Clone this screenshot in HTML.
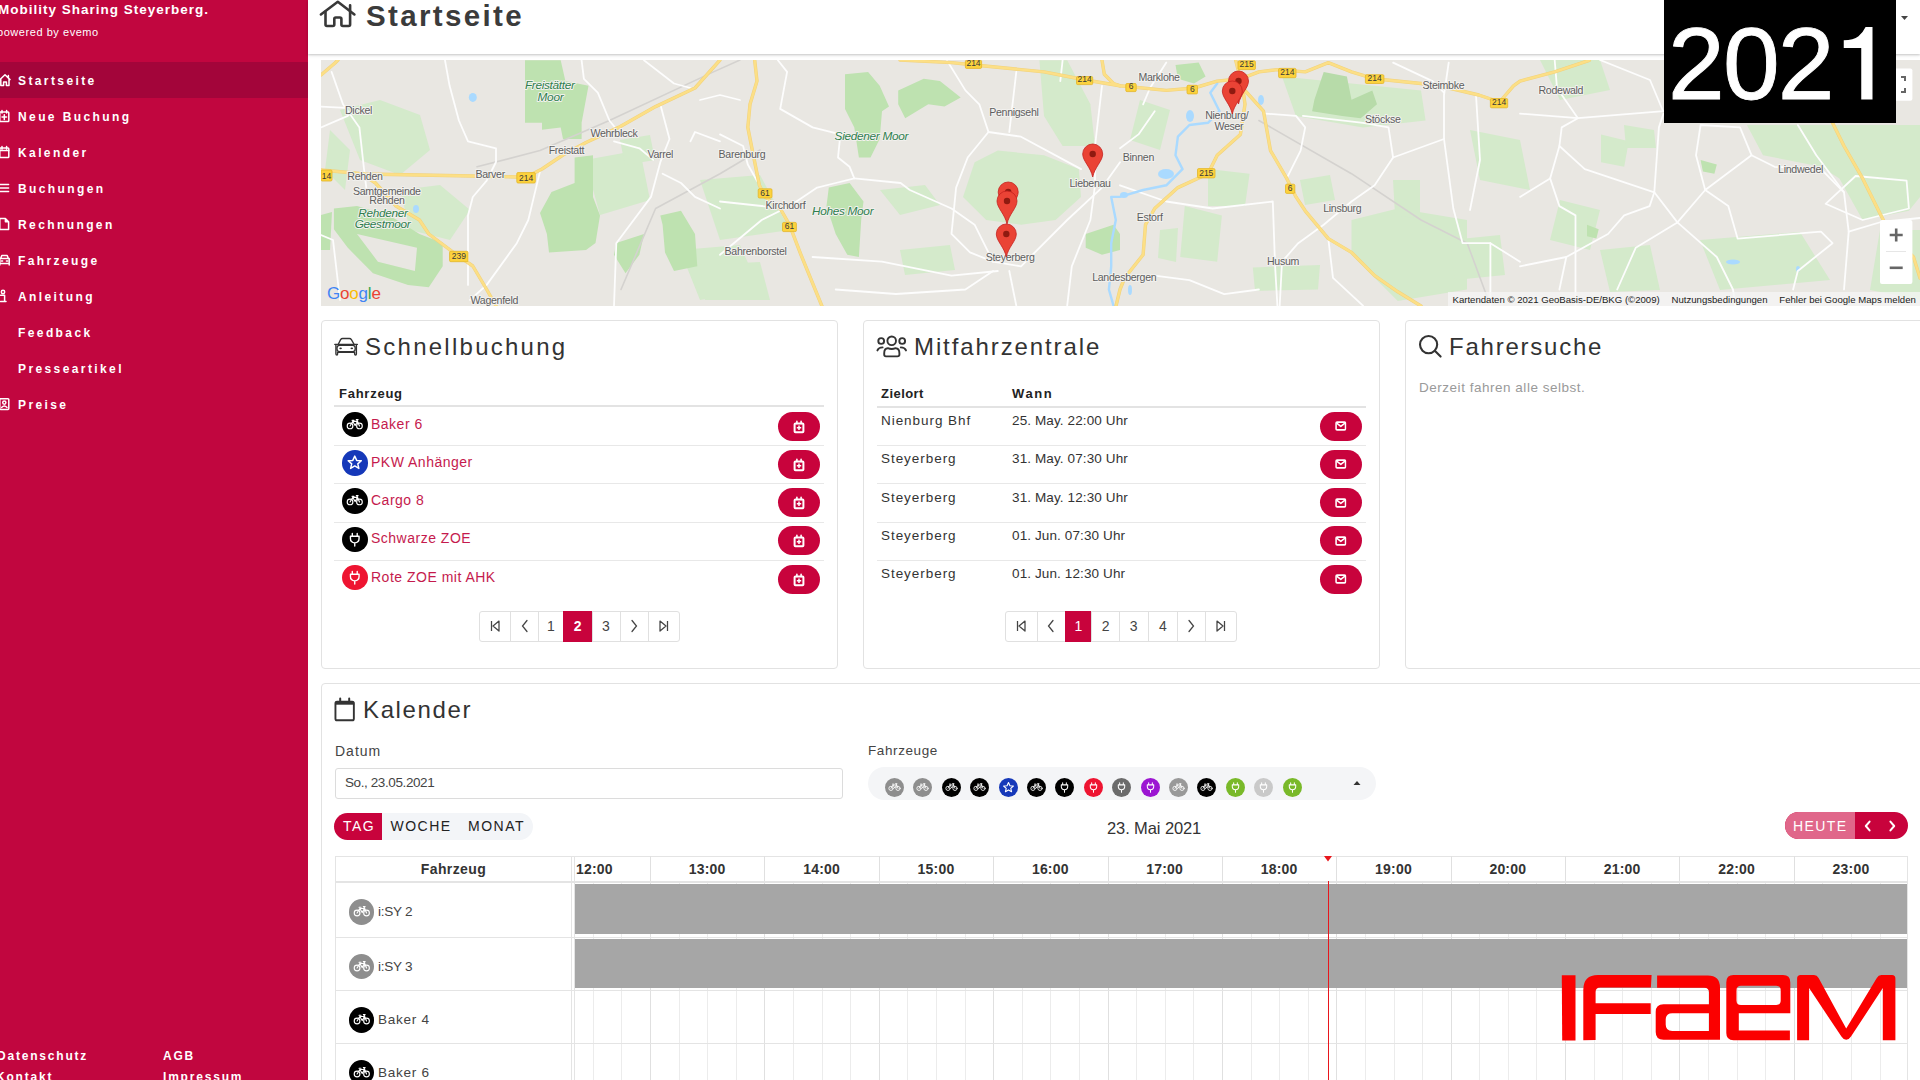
<!DOCTYPE html>
<html><head><meta charset="utf-8"><title>Startseite</title>
<style>
*{box-sizing:border-box;margin:0;padding:0}
html,body{width:1920px;height:1080px;overflow:hidden;background:#fff;font-family:"Liberation Sans",sans-serif;color:#333}
.a{position:absolute;white-space:nowrap}
.nav{position:absolute;left:18px;font-weight:bold;font-size:12px;letter-spacing:2.4px;white-space:nowrap;line-height:14px;color:#fff}
.card{position:absolute;background:#fff;border:1px solid #e2e2e2;border-radius:4px}
.ttl{position:absolute;font-size:24px;color:#333;white-space:nowrap;line-height:28px;letter-spacing:1.9px}
.th{position:absolute;font-weight:bold;font-size:13px;color:#222;white-space:nowrap;line-height:15px;letter-spacing:.45px}
.td{position:absolute;font-size:13.5px;color:#333;white-space:nowrap;line-height:16px;letter-spacing:.3px}
.btn{position:absolute;width:42px;height:29px;border-radius:15px;background:#c8033c}
.btn svg{position:absolute;left:15px;top:8px}
.vc{position:absolute;border-radius:50%}
.vc svg{position:absolute;left:0;top:0;width:100%;height:100%}
.pg{position:absolute;top:611px;height:31px;border:1px solid #e0e0e0;border-radius:3px;overflow:hidden}
.pg div{position:absolute;top:0;height:29px;border-left:1px solid #e0e0e0;font-size:14px;color:#444;line-height:29px;text-align:center}
.pg div.f{border-left:none}
.pg .act{background:#c8033c;color:#fff;font-weight:bold;border-left-color:#c8033c}
.gl{position:absolute;background:#e6e6e6}
</style></head><body>

<svg width="0" height="0" style="position:absolute">
<defs>
<symbol id="bike" viewBox="0 0 26 26"><g fill="none" stroke="#fff" stroke-width="1.15" stroke-linecap="round" stroke-linejoin="round"><circle cx="8.2" cy="14.2" r="2.9"/><circle cx="17.8" cy="14.2" r="2.9"/><path d="M8.2 14.2 L11 9.6 L13.4 13.8 L15.8 9.4 L17.8 14.2 M11 9.6 H15.8 M15.2 7.8 L15.8 9.4 M14.6 7.8 H16.4 M10.2 8.4 H12.2"/></g></symbol>
<symbol id="plug" viewBox="0 0 26 26"><g fill="none" stroke="#fff" stroke-width="1.4" stroke-linecap="round" stroke-linejoin="round"><path d="M10.5 6.5 V9.2 M15.5 6.5 V9.2 M8.6 9.4 H17.4 V11.6 Q17.4 15.6 13 16.2 Q8.6 15.6 8.6 11.6 Z M13 16.2 V19.4"/></g></symbol>
<symbol id="star" viewBox="0 0 26 26"><path fill="none" stroke="#fff" stroke-width="1.5" stroke-linejoin="round" d="M13 6.2 L15 10.6 L19.7 11 L16.1 14.1 L17.2 18.8 L13 16.3 L8.8 18.8 L9.9 14.1 L6.3 11 L11 10.6 Z"/></symbol>
<symbol id="calp" viewBox="0 0 12 14"><g fill="none" stroke="#fff" stroke-width="2"><rect x="1.6" y="3.4" width="8.8" height="8.8" rx="0.8"/></g><g stroke="#fff" stroke-width="1.6" stroke-linecap="round"><path d="M3.9 1.2 V3.6 M8.1 1.2 V3.6"/></g><g stroke="#fff" stroke-width="1.5"><path d="M6 5.6 V10 M3.8 7.8 H8.2"/></g></symbol>
<symbol id="env" viewBox="0 0 14 12"><g fill="none" stroke="#fff" stroke-width="1.9" stroke-linejoin="round"><rect x="1.3" y="1.3" width="11.4" height="9.4" rx="1.2"/><path d="M2 2.6 L7 6.4 L12 2.6"/></g></symbol>
</defs></svg>

<div class="a" style="left:0;top:0;width:308px;height:1080px;background:#c1063f;overflow:hidden">
<div class="a" style="left:-2px;top:2px;font-weight:bold;font-size:13.5px;letter-spacing:1.0px;line-height:16px;color:#fff">Mobility Sharing Steyerberg.</div>
<div class="a" style="left:-3px;top:26px;font-size:11px;letter-spacing:.55px;line-height:12px;color:#fff">powered by evemo</div>
<div class="a" style="left:0;top:62px;width:308px;height:36px;background:#a3053a"></div>
<div class="nav" style="top:74px">Startseite</div>
<div class="nav" style="top:110px">Neue Buchung</div>
<div class="nav" style="top:146px">Kalender</div>
<div class="nav" style="top:182px">Buchungen</div>
<div class="nav" style="top:218px">Rechnungen</div>
<div class="nav" style="top:254px">Fahrzeuge</div>
<div class="nav" style="top:290px">Anleitung</div>
<div class="nav" style="top:326px">Feedback</div>
<div class="nav" style="top:362px">Presseartikel</div>
<div class="nav" style="top:398px">Preise</div>
<svg class="a" style="left:-1px;top:73px" width="12" height="14" viewBox="0 0 12 14"><g fill="none" stroke="#fff" stroke-width="1.5" stroke-linejoin="round" stroke-linecap="round"><path d="M0.5 7 L6 1.8 L11 6.6 M1.8 6 V12.4 H4.6 V9 H7.4 V12.4 H10 V6 M9.4 2.4 V4.8"/></g></svg>
<svg class="a" style="left:-1px;top:109px" width="12" height="14" viewBox="0 0 12 14"><g fill="none" stroke="#fff" stroke-width="1.5" stroke-linejoin="round" stroke-linecap="round"><rect x="0.8" y="3" width="9" height="9.6" rx="0.8"/><path d="M3 1.4 V4 M7.6 1.4 V4 M5.3 5.8 V10.4 M3 8.1 H7.6"/></g></svg>
<svg class="a" style="left:-1px;top:145px" width="12" height="14" viewBox="0 0 12 14"><g fill="none" stroke="#fff" stroke-width="1.5" stroke-linejoin="round" stroke-linecap="round"><rect x="0.8" y="3" width="9" height="9.6" rx="0.8"/><path d="M3 1.4 V4 M7.6 1.4 V4 M0.8 5.4 H9.8"/></g></svg>
<svg class="a" style="left:-1px;top:181px" width="12" height="14" viewBox="0 0 12 14"><g fill="none" stroke="#fff" stroke-width="1.5" stroke-linejoin="round" stroke-linecap="round"><path d="M0.8 3.6 H9.6 M0.8 7 H9.6 M0.8 10.4 H9.6"/></g></svg>
<svg class="a" style="left:-1px;top:217px" width="12" height="14" viewBox="0 0 12 14"><g fill="none" stroke="#fff" stroke-width="1.5" stroke-linejoin="round" stroke-linecap="round"><path d="M0.8 1.6 H6.4 L9.6 4.8 V12.6 H0.8 Z M6.4 1.6 V4.8 H9.6"/></g></svg>
<svg class="a" style="left:-1px;top:253px" width="12" height="14" viewBox="0 0 12 14"><g fill="none" stroke="#fff" stroke-width="1.5" stroke-linejoin="round" stroke-linecap="round"><path d="M1.6 5.6 L2.8 2.4 H8.2 L9.4 5.6 M0.8 5.6 H10.2 V10.4 H0.8 Z M0.8 10.4 V12 M10.2 10.4 V12 M2.4 8 H3.6 M7.4 8 H8.6"/></g></svg>
<svg class="a" style="left:-1px;top:289px" width="12" height="14" viewBox="0 0 12 14"><g fill="none" stroke="#fff" stroke-width="1.5" stroke-linejoin="round" stroke-linecap="round"><circle cx="4" cy="3" r="1.7"/><path d="M1.6 6.2 H5.6 V12.4 M1.6 12.4 H7"/></g></svg>
<svg class="a" style="left:-1px;top:397px" width="12" height="14" viewBox="0 0 12 14"><g fill="none" stroke="#fff" stroke-width="1.5" stroke-linejoin="round" stroke-linecap="round"><rect x="0.8" y="1.8" width="9" height="10.6" rx="0.8"/><circle cx="5.3" cy="5.6" r="1.6"/><path d="M2.6 10.4 Q5.3 7.4 8 10.4"/></g></svg>
<div class="nav" style="left:-3px;top:1049px;letter-spacing:1.8px">Datenschutz</div>
<div class="nav" style="left:163px;top:1049px;letter-spacing:1.8px">AGB</div>
<div class="nav" style="left:-4px;top:1069.5px;letter-spacing:1.8px">Kontakt</div>
<div class="nav" style="left:163px;top:1069.5px;letter-spacing:1.8px">Impressum</div>
</div>
<div class="a" style="left:308px;top:0;width:1612px;height:54px;background:#fff;box-shadow:0 1px 2px rgba(0,0,0,.18),0 2px 4px rgba(0,0,0,.06)"></div>
<svg class="a" style="left:315px;top:0" width="45" height="32" viewBox="315 0 45 32"><g fill="none" stroke="#383838" stroke-width="2.6" stroke-linecap="round" stroke-linejoin="round"><path d="M320.9 14.5 L337.8 1.8 L354.4 14.5"/><path d="M325.5 11.8 V24.5 Q325.5 26 327 26 H332.8 Q334.3 26 334.3 24.5 V19 Q334.3 17.5 335.8 17.5 H339.9 Q341.4 17.5 341.4 19 V24.5 Q341.4 26 342.9 26 H348.6 Q350.1 26 350.1 24.5 V5.3"/></g></svg>
<div class="a" style="left:366px;top:0px;font-weight:bold;font-size:29.5px;letter-spacing:2.35px;line-height:32px;color:#3b3b3b">Startseite</div>
<svg class="a" style="left:1900px;top:15px" width="10" height="6"><path d="M1 1 H8 L4.5 5 Z" fill="#444"/></svg>
<div class="a" style="left:321px;top:60px;width:1599px;height:246px;overflow:hidden;background:#e9e7e2">
<svg width="1599" height="246" viewBox="321 60 1599 246" style="position:absolute;left:0;top:0">
<rect x="321" y="60" width="1599" height="246" fill="#e9e7e2"/>
<path d="M340.0 110.0 L380.0 100.0 L420.0 115.0 L430.0 150.0 L400.0 175.0 L360.0 160.0 Z" fill="#d4eacb" opacity="1"/>
<path d="M400.0 190.0 L440.0 185.0 L470.0 210.0 L450.0 240.0 L410.0 230.0 Z" fill="#d4eacb" opacity="1"/>
<path d="M585.0 160.0 L640.0 150.0 L650.0 200.0 L600.0 215.0 Z" fill="#d4eacb" opacity="1"/>
<path d="M700.0 180.0 L760.0 175.0 L790.0 230.0 L720.0 240.0 Z" fill="#d4eacb" opacity="1"/>
<path d="M880.0 190.0 L925.0 185.0 L940.0 205.0 L900.0 215.0 Z" fill="#d4eacb" opacity="1"/>
<path d="M974.6 162.2 L997.8 150.6 L1044.0 155.2 L1078.8 169.1 L1081.0 196.9 L1055.6 220.0 L1021.0 224.7 L986.2 220.0 L963.0 196.9 Z" fill="#d4eacb" opacity="1"/>
<path d="M1039.4 60.3 L1067.2 60.3 L1090.4 104.3 L1095.0 146.0 L1062.6 146.0 L1044.0 115.9 Z" fill="#d4eacb" opacity="1"/>
<path d="M1282.0 76.5 L1421.0 90.4 L1425.6 120.5 L1363.0 127.4 L1295.9 115.9 Z" fill="#d4eacb" opacity="1"/>
<path d="M1351.5 220.0 L1397.8 208.5 L1467.0 220.0 L1467.0 289.5 L1397.8 301.0 L1351.5 254.8 Z" fill="#d4eacb" opacity="1"/>
<path d="M1208.0 169.1 L1249.6 173.7 L1245.0 206.1 L1208.0 206.1 Z" fill="#d4eacb" opacity="1"/>
<path d="M1184.8 206.1 L1221.9 215.4 L1217.2 261.7 L1180.2 257.0 Z" fill="#d4eacb" opacity="1"/>
<path d="M1746.9 125.0 L1920.0 125.0 L1920.0 196.9 L1908.9 210.8 L1862.6 220.0 L1839.4 178.4 L1821.0 166.8 L1763.0 155.2 Z" fill="#d4eacb" opacity="1"/>
<path d="M1601.0 134.4 L1628.8 141.3 L1624.2 166.8 L1601.0 162.2 Z" fill="#d4eacb" opacity="1"/>
<path d="M1624.0 125.0 L1654.0 130.0 L1656.0 148.0 L1626.0 148.0 Z" fill="#d4eacb" opacity="1"/>
<path d="M1540.0 60.0 L1600.0 60.0 L1610.0 90.0 L1560.0 100.0 Z" fill="#d4eacb" opacity="1"/>
<path d="M1700.0 240.0 L1800.0 232.0 L1830.0 280.0 L1720.0 290.0 Z" fill="#d4eacb" opacity="1"/>
<path d="M1470.0 130.0 L1520.0 140.0 L1530.0 190.0 L1480.0 180.0 Z" fill="#d4eacb" opacity="1"/>
<path d="M1560.0 200.0 L1600.0 210.0 L1590.0 250.0 L1550.0 240.0 Z" fill="#d4eacb" opacity="1"/>
<path d="M1140.0 100.0 L1170.0 110.0 L1160.0 150.0 L1130.0 140.0 Z" fill="#d4eacb" opacity="1"/>
<path d="M330.0 130.0 L350.0 150.0 L345.0 190.0 L325.0 170.0 Z" fill="#d4eacb" opacity="1"/>
<path d="M680.0 250.0 L740.0 245.0 L760.0 290.0 L700.0 300.0 Z" fill="#d4eacb" opacity="1"/>
<path d="M1880.0 230.0 L1920.0 230.0 L1920.0 300.0 L1870.0 290.0 Z" fill="#d4eacb" opacity="1"/>
<path d="M1252.8 267.5 L1320.0 265.0 L1318.0 289.4 L1255.0 291.0 Z" fill="#d4eacb" opacity="1"/>
<path d="M1393.0 180.0 L1420.0 180.0 L1420.0 219.0 L1395.0 215.0 Z" fill="#d4eacb" opacity="1"/>
<path d="M1300.0 180.0 L1330.0 175.0 L1335.0 200.0 L1305.0 205.0 Z" fill="#d4eacb" opacity="1"/>
<path d="M1160.0 230.0 L1178.0 228.0 L1176.0 262.0 L1158.0 258.0 Z" fill="#d4eacb" opacity="1"/>
<path d="M620.0 140.0 L650.0 135.0 L655.0 160.0 L625.0 165.0 Z" fill="#d4eacb" opacity="1"/>
<path d="M700.0 265.0 L760.0 262.0 L770.0 300.0 L705.0 300.0 Z" fill="#d4eacb" opacity="1"/>
<path d="M900.0 250.0 L950.0 245.0 L955.0 270.0 L905.0 275.0 Z" fill="#d4eacb" opacity="1"/>
<path d="M1450.0 240.0 L1500.0 235.0 L1505.0 275.0 L1455.0 280.0 Z" fill="#d4eacb" opacity="1"/>
<path d="M1600.0 250.0 L1650.0 245.0 L1660.0 290.0 L1610.0 292.0 Z" fill="#d4eacb" opacity="1"/>
<path d="M525.0 60.3 L560.7 60.3 L565.4 81.0 L588.5 85.8 L581.6 122.8 L581.6 139.0 L563.0 139.0 L560.7 127.4 L542.0 129.8 L542.0 122.8 L525.0 122.8 Z" fill="#bee2b0" opacity="1"/>
<path d="M574.6 157.5 L593.0 155.2 L593.0 196.9 L600.0 215.4 L595.5 243.0 L586.0 250.0 L549.0 252.4 L546.9 234.0 L540.0 213.0 L551.5 192.0 L574.6 183.0 Z" fill="#bee2b0" opacity="1"/>
<path d="M660.3 215.4 L681.0 210.8 L695.0 234.0 L697.3 266.3 L674.0 271.0 L665.0 252.4 L662.6 224.7 Z" fill="#bee2b0" opacity="1"/>
<path d="M616.3 243.0 L644.0 234.0 L639.4 254.8 L625.5 273.3 L614.0 254.8 Z" fill="#bee2b0" opacity="1"/>
<path d="M845.0 74.2 L868.1 71.9 L879.7 85.8 L889.0 106.6 L882.0 111.2 L879.7 139.0 L870.5 157.5 L858.9 157.5 L854.3 127.4 L845.0 109.0 Z" fill="#bee2b0" opacity="1"/>
<path d="M898.2 90.4 L923.7 78.8 L939.9 81.1 L960.7 97.4 L944.5 106.6 L928.3 104.3 L905.2 118.2 L898.2 104.3 Z" fill="#bee2b0" opacity="1"/>
<path d="M828.8 187.6 L849.6 183.0 L863.5 201.5 L861.2 220.0 L858.9 257.0 L847.3 254.8 L835.7 233.9 L826.5 206.1 Z" fill="#bee2b0" opacity="1"/>
<path d="M1085.7 234.0 L1113.5 224.7 L1120.0 234.0 L1120.0 250.0 L1102.0 254.8 L1085.7 247.8 Z" fill="#bee2b0" opacity="1"/>
<path d="M1175.5 65.0 L1198.7 62.6 L1205.6 76.5 L1194.0 83.5 L1177.9 78.8 Z" fill="#bee2b0" opacity="1"/>
<path d="M1700.6 159.9 L1716.8 164.5 L1714.4 173.7 L1702.9 171.4 Z" fill="#bee2b0" opacity="1"/>
<path d="M1587.0 224.7 L1598.7 229.3 L1596.4 238.6 L1587.0 236.2 Z" fill="#bee2b0" opacity="1"/>
<path d="M321.0 215.0 L332.0 212.0 L330.0 250.0 L321.0 250.0 Z" fill="#bee2b0" opacity="1"/>
<path fill-rule="evenodd" fill="#bee2b0" d="M333.9 208.5 L357 206 L389.4 215.4 L419.5 234 L442.7 243 L442.7 266.3 L428.8 287.2 L408 284.9 L373 273.3 L347.8 247.8 L333.9 229.3 Z M357 234 L417 247.8 L414.9 271 L377.9 261.7 Z"/>
<path d="M1323.7 71.9 L1346.9 76.5 L1351.5 99.7 L1372.3 90.4 L1377.0 104.3 L1360.7 118.2 L1342.2 115.9 L1312.1 111.2 L1314.4 99.7 Z" fill="#b7dba9" opacity="1"/>
<ellipse cx="472.8" cy="97.4" rx="4" ry="4.5" fill="#aadaff"/>
<ellipse cx="416" cy="209" rx="3" ry="4" fill="#aadaff"/>
<ellipse cx="1190" cy="116" rx="4" ry="6" fill="#aadaff"/>
<ellipse cx="1166" cy="174" rx="8" ry="5" fill="#aadaff"/>
<ellipse cx="1261" cy="100" rx="3" ry="5" fill="#aadaff"/>
<ellipse cx="1733" cy="262" rx="7" ry="2.5" fill="#aadaff"/>
<ellipse cx="1798" cy="269" rx="2" ry="3" fill="#aadaff"/>
<ellipse cx="1124" cy="195" rx="4" ry="3" fill="#aadaff"/>
<ellipse cx="1130" cy="290" rx="2" ry="5" fill="#aadaff"/>
<path d="M477.0 166.8 L540.0 150.6 L609.4 120.5 L713.5 71.9 L740.0 60.0" fill="none" stroke="#d4d2cf" stroke-width="1.6" stroke-linejoin="round" stroke-linecap="round" opacity="1"/>
<path d="M621.0 289.5 L655.6 208.5 L720.0 173.7 L760.0 150.0" fill="none" stroke="#d4d2cf" stroke-width="1.6" stroke-linejoin="round" stroke-linecap="round" opacity="1"/>
<path d="M1258.9 120.5 L1351.5 173.7 L1421.0 220.0 L1467.2 243.2 L1490.4 305.7" fill="none" stroke="#d4d2cf" stroke-width="1.6" stroke-linejoin="round" stroke-linecap="round" opacity="1"/>
<path d="M321.0 320.0 L400.0 310.0" fill="none" stroke="#d4d2cf" stroke-width="1.6" stroke-linejoin="round" stroke-linecap="round" opacity="1"/>
<path d="M445.0 60.3 L449.6 85.8 L458.9 120.5 L468.0 141.3 L496.0 148.3 L496.0 162.0 L486.7 180.7 L472.8 197.0 L468.0 215.4 L468.0 284.9" fill="none" stroke="#fdfdfd" stroke-width="1.8" stroke-linejoin="round" stroke-linecap="round" opacity="1"/>
<path d="M331.6 71.9 L343.0 104.3 L359.4 127.4 L364.0 169.0 L366.3 187.6" fill="none" stroke="#fdfdfd" stroke-width="1.8" stroke-linejoin="round" stroke-linecap="round" opacity="1"/>
<path d="M321.0 127.4 L347.8 115.9 L354.7 109.0" fill="none" stroke="#fdfdfd" stroke-width="1.8" stroke-linejoin="round" stroke-linecap="round" opacity="1"/>
<path d="M321.0 106.6 L345.5 107.8" fill="none" stroke="#fdfdfd" stroke-width="1.8" stroke-linejoin="round" stroke-linecap="round" opacity="1"/>
<path d="M540.0 171.4 L528.3 220.0 L516.8 243.2 L486.7 284.9 L470.0 300.0" fill="none" stroke="#fdfdfd" stroke-width="1.8" stroke-linejoin="round" stroke-linecap="round" opacity="1"/>
<path d="M581.6 60.3 L583.9 78.8 L597.8 92.7 L609.4 120.5 L618.6 132.0" fill="none" stroke="#fdfdfd" stroke-width="1.8" stroke-linejoin="round" stroke-linecap="round" opacity="1"/>
<path d="M660.3 104.3 L669.5 139.0 L660.3 162.2 L651.0 196.9 L616.3 243.2 L614.0 305.7" fill="none" stroke="#fdfdfd" stroke-width="1.8" stroke-linejoin="round" stroke-linecap="round" opacity="1"/>
<path d="M644.0 60.3 L674.0 83.5 L690.4 88.0" fill="none" stroke="#fdfdfd" stroke-width="1.8" stroke-linejoin="round" stroke-linecap="round" opacity="1"/>
<path d="M614.0 141.3 L639.4 148.3 L653.3 159.9" fill="none" stroke="#fdfdfd" stroke-width="1.8" stroke-linejoin="round" stroke-linecap="round" opacity="1"/>
<path d="M662.6 173.7 L681.0 183.0 L695.0 196.9 L720.0 208.5" fill="none" stroke="#fdfdfd" stroke-width="1.8" stroke-linejoin="round" stroke-linecap="round" opacity="1"/>
<path d="M690.4 141.3 L695.0 132.0 L720.0 141.3" fill="none" stroke="#fdfdfd" stroke-width="1.8" stroke-linejoin="round" stroke-linecap="round" opacity="1"/>
<path d="M321.0 235.0 L333.0 240.0 L340.0 300.0" fill="none" stroke="#fdfdfd" stroke-width="1.8" stroke-linejoin="round" stroke-linecap="round" opacity="1"/>
<path d="M777.9 60.3 L787.1 71.9 L780.2 108.9 L812.6 127.4 L840.4 134.4 L838.0 157.5 L849.6 166.8 L854.3 178.4 L835.7 183.0 L817.2 187.6 L796.4 201.5 L784.8 208.5 L720.0 201.5" fill="none" stroke="#fdfdfd" stroke-width="1.8" stroke-linejoin="round" stroke-linecap="round" opacity="1"/>
<path d="M854.3 178.4 L900.6 183.0 L909.8 190.0 L951.5 208.5 L974.6 224.7 L993.1 261.7" fill="none" stroke="#fdfdfd" stroke-width="1.8" stroke-linejoin="round" stroke-linecap="round" opacity="1"/>
<path d="M946.9 60.3 L965.4 90.4 L979.3 104.3 L988.5 132.0 L1021.0 136.7 L1081.1 169.1" fill="none" stroke="#fdfdfd" stroke-width="1.8" stroke-linejoin="round" stroke-linecap="round" opacity="1"/>
<path d="M988.5 132.0 L967.7 157.5 L956.1 187.6 L951.5 233.9 L970.0 252.4 L993.1 261.7 L1021.0 266.3 L1067.2 220.0 L1102.0 187.6 L1120.0 162.2" fill="none" stroke="#fdfdfd" stroke-width="1.8" stroke-linejoin="round" stroke-linecap="round" opacity="1"/>
<path d="M1016.3 71.9 L1009.3 132.0" fill="none" stroke="#fdfdfd" stroke-width="1.8" stroke-linejoin="round" stroke-linecap="round" opacity="1"/>
<path d="M1062.6 60.3 L1060.3 81.1" fill="none" stroke="#fdfdfd" stroke-width="1.8" stroke-linejoin="round" stroke-linecap="round" opacity="1"/>
<path d="M1102.0 85.8 L1095.0 146.0 L1095.0 185.3 L1090.4 220.0 L1071.8 266.3 L1067.2 305.7" fill="none" stroke="#fdfdfd" stroke-width="1.8" stroke-linejoin="round" stroke-linecap="round" opacity="1"/>
<path d="M720.0 254.8 L761.7 220.0 L784.8 208.5" fill="none" stroke="#fdfdfd" stroke-width="1.8" stroke-linejoin="round" stroke-linecap="round" opacity="1"/>
<path d="M812.6 257.0 L882.0 261.7 L951.5 275.6 L997.8 271.0" fill="none" stroke="#fdfdfd" stroke-width="1.8" stroke-linejoin="round" stroke-linecap="round" opacity="1"/>
<path d="M1009.3 271.0 L1016.3 305.7" fill="none" stroke="#fdfdfd" stroke-width="1.8" stroke-linejoin="round" stroke-linecap="round" opacity="1"/>
<path d="M993.1 271.0 L965.4 289.5 L895.9 294.0 L835.7 289.5" fill="none" stroke="#fdfdfd" stroke-width="1.8" stroke-linejoin="round" stroke-linecap="round" opacity="1"/>
<path d="M720.0 134.4 L743.1 146.0 L747.8 164.5 L757.0 180.7" fill="none" stroke="#fdfdfd" stroke-width="1.8" stroke-linejoin="round" stroke-linecap="round" opacity="1"/>
<path d="M700.0 100.0 L720.0 95.0 L740.0 100.0" fill="none" stroke="#fdfdfd" stroke-width="1.8" stroke-linejoin="round" stroke-linecap="round" opacity="1"/>
<path d="M1265.8 113.6 L1296.0 115.9 L1305.2 127.4 L1300.6 150.6 L1286.7 178.4" fill="none" stroke="#fdfdfd" stroke-width="1.8" stroke-linejoin="round" stroke-linecap="round" opacity="1"/>
<path d="M1302.9 115.9 L1363.0 122.8 L1388.5 127.4 L1393.1 157.5 L1444.0 139.0 L1444.0 95.0 L1448.7 62.6" fill="none" stroke="#fdfdfd" stroke-width="1.8" stroke-linejoin="round" stroke-linecap="round" opacity="1"/>
<path d="M1393.1 157.5 L1374.6 185.3 L1351.5 201.5 L1323.7 224.7 L1298.2 243.2 L1282.0 261.7 L1279.7 305.7" fill="none" stroke="#fdfdfd" stroke-width="1.8" stroke-linejoin="round" stroke-linecap="round" opacity="1"/>
<path d="M1120.0 185.3 L1166.3 201.5 L1212.6 208.5 L1272.8 201.5 L1275.1 266.3 L1277.4 305.7" fill="none" stroke="#fdfdfd" stroke-width="1.8" stroke-linejoin="round" stroke-linecap="round" opacity="1"/>
<path d="M1444.0 139.0 L1453.3 208.5 L1462.6 243.2 L1490.4 243.2 L1520.0 261.7" fill="none" stroke="#fdfdfd" stroke-width="1.8" stroke-linejoin="round" stroke-linecap="round" opacity="1"/>
<path d="M1490.4 243.2 L1490.4 305.7" fill="none" stroke="#fdfdfd" stroke-width="1.8" stroke-linejoin="round" stroke-linecap="round" opacity="1"/>
<path d="M1328.3 238.6 L1333.0 277.9 L1363.0 305.7" fill="none" stroke="#fdfdfd" stroke-width="1.8" stroke-linejoin="round" stroke-linecap="round" opacity="1"/>
<path d="M1154.7 275.6 L1189.4 280.2 L1224.2 294.1 L1258.9 289.5" fill="none" stroke="#fdfdfd" stroke-width="1.8" stroke-linejoin="round" stroke-linecap="round" opacity="1"/>
<path d="M1143.1 104.3 L1150.0 88.0 L1166.3 62.6" fill="none" stroke="#fdfdfd" stroke-width="1.8" stroke-linejoin="round" stroke-linecap="round" opacity="1"/>
<path d="M1120.0 148.3 L1138.5 134.4 L1154.7 111.2" fill="none" stroke="#fdfdfd" stroke-width="1.8" stroke-linejoin="round" stroke-linecap="round" opacity="1"/>
<path d="M1393.1 62.6 L1432.5 81.1 L1444.0 92.7" fill="none" stroke="#fdfdfd" stroke-width="1.8" stroke-linejoin="round" stroke-linecap="round" opacity="1"/>
<path d="M1554.7 60.3 L1557.0 88.0 L1577.9 118.2 L1561.7 127.4 L1559.4 146.0 L1584.8 169.1 L1654.3 192.3 L1658.9 127.4 L1663.5 113.6" fill="none" stroke="#fdfdfd" stroke-width="1.8" stroke-linejoin="round" stroke-linecap="round" opacity="1"/>
<path d="M1520.0 113.6 L1577.9 118.2 L1663.5 111.2 L1700.0 110.0" fill="none" stroke="#fdfdfd" stroke-width="1.8" stroke-linejoin="round" stroke-linecap="round" opacity="1"/>
<path d="M1559.4 146.0 L1550.1 178.4 L1520.0 196.9" fill="none" stroke="#fdfdfd" stroke-width="1.8" stroke-linejoin="round" stroke-linecap="round" opacity="1"/>
<path d="M1550.1 178.4 L1559.4 206.1 L1575.5 215.4 L1575.5 305.7" fill="none" stroke="#fdfdfd" stroke-width="1.8" stroke-linejoin="round" stroke-linecap="round" opacity="1"/>
<path d="M1654.3 192.3 L1649.6 206.1 L1624.2 215.4 L1608.0 234.0 L1566.3 257.0 L1559.4 289.5" fill="none" stroke="#fdfdfd" stroke-width="1.8" stroke-linejoin="round" stroke-linecap="round" opacity="1"/>
<path d="M1654.3 192.3 L1677.4 222.4 L1716.8 257.0 L1733.0 289.5 L1735.3 305.7" fill="none" stroke="#fdfdfd" stroke-width="1.8" stroke-linejoin="round" stroke-linecap="round" opacity="1"/>
<path d="M1677.4 222.4 L1705.2 190.0 L1751.5 155.2 L1740.0 127.4 L1700.6 125.0 L1696.0 155.2 L1705.2 190.0" fill="none" stroke="#fdfdfd" stroke-width="1.8" stroke-linejoin="round" stroke-linecap="round" opacity="1"/>
<path d="M1705.2 190.0 L1728.3 206.1 L1737.6 238.6 L1821.0 231.6 L1832.5 243.2 L1797.8 271.0 L1793.1 289.5" fill="none" stroke="#fdfdfd" stroke-width="1.8" stroke-linejoin="round" stroke-linecap="round" opacity="1"/>
<path d="M1751.5 155.2 L1774.6 166.8 L1821.0 169.1 L1844.0 192.3 L1848.7 231.6 L1844.0 289.5" fill="none" stroke="#fdfdfd" stroke-width="1.8" stroke-linejoin="round" stroke-linecap="round" opacity="1"/>
<path d="M1797.8 125.0 L1816.3 155.2 L1844.0 192.3" fill="none" stroke="#fdfdfd" stroke-width="1.8" stroke-linejoin="round" stroke-linecap="round" opacity="1"/>
<path d="M1855.6 176.0 L1906.6 180.7 L1908.9 208.5 L1862.6 220.0 L1825.6 203.8 L1855.6 176.0" fill="none" stroke="#fdfdfd" stroke-width="1.8" stroke-linejoin="round" stroke-linecap="round" opacity="1"/>
<path d="M1848.7 231.6 L1881.0 222.0 L1920.0 218.0" fill="none" stroke="#fdfdfd" stroke-width="1.8" stroke-linejoin="round" stroke-linecap="round" opacity="1"/>
<path d="M1520.0 266.3 L1566.3 257.0" fill="none" stroke="#fdfdfd" stroke-width="1.8" stroke-linejoin="round" stroke-linecap="round" opacity="1"/>
<path d="M1677.4 222.4 L1635.7 247.8 L1617.2 289.5" fill="none" stroke="#fdfdfd" stroke-width="1.8" stroke-linejoin="round" stroke-linecap="round" opacity="1"/>
<path d="M1476.0 95.0 L1480.0 160.0 L1470.0 210.0" fill="none" stroke="#fdfdfd" stroke-width="1.8" stroke-linejoin="round" stroke-linecap="round" opacity="1"/>
<path d="M1600.0 60.0 L1650.0 80.0 L1663.0 111.0" fill="none" stroke="#fdfdfd" stroke-width="1.8" stroke-linejoin="round" stroke-linecap="round" opacity="1"/>
<path d="M1217.2 83.5 L1210.3 92.7 L1219.5 111.2 L1208.0 122.8 L1189.4 125.0 L1177.9 136.7 L1175.5 155.2 L1182.5 169.1 L1166.3 185.3 L1143.1 190.0 L1120.0 196.9 L1111.2 196.9 L1115.8 220.0 L1111.2 243.2 L1111.2 266.3 L1108.9 289.5 L1113.5 305.7" fill="none" stroke="#aadaff" stroke-width="2.4" stroke-linejoin="round" stroke-linecap="round" opacity="1"/>
<path d="M321.0 170.0 L365.0 174.0 L472.8 176.0 L526.0 177.2 L542.0 169.0 L563.0 155.0 L586.0 142.5 L618.6 127.4 L655.6 106.6 L695.0 88.0 L720.0 60.0" fill="none" stroke="#f1d27c" stroke-width="3.4" stroke-linejoin="round" stroke-linecap="round" opacity="1"/>
<path d="M321.0 75.0 L335.0 63.0 L338.0 60.0" fill="none" stroke="#f1d27c" stroke-width="3.4" stroke-linejoin="round" stroke-linecap="round" opacity="1"/>
<path d="M365.0 176.0 L375.5 183.0 L396.0 206.0 L419.5 220.0 L428.8 234.0 L456.6 254.8 L472.8 266.0 L486.7 289.5 L496.0 306.0" fill="none" stroke="#f1d27c" stroke-width="3.4" stroke-linejoin="round" stroke-linecap="round" opacity="1"/>
<path d="M754.7 60.3 L757.0 81.1 L750.0 104.3 L747.8 127.4 L752.4 150.6 L759.4 185.3 L765.0 196.9 L780.2 208.5 L789.4 224.7 L801.0 254.8 L821.9 306.0" fill="none" stroke="#f1d27c" stroke-width="3.4" stroke-linejoin="round" stroke-linecap="round" opacity="1"/>
<path d="M900.0 60.0 L951.5 62.6 L974.6 65.0 L1044.0 71.9 L1085.7 80.0 L1120.0 85.8 L1166.3 90.4 L1194.0 88.0 L1217.2 81.1 L1240.4 78.8" fill="none" stroke="#f1d27c" stroke-width="3.4" stroke-linejoin="round" stroke-linecap="round" opacity="1"/>
<path d="M1102.0 60.3 L1104.3 74.2 L1113.5 83.5 L1120.0 85.8" fill="none" stroke="#f1d27c" stroke-width="3.4" stroke-linejoin="round" stroke-linecap="round" opacity="1"/>
<path d="M1240.4 78.8 L1258.9 71.9 L1277.4 69.6 L1305.2 71.9 L1328.3 62.6 L1351.5 71.9 L1374.6 78.8 L1421.0 83.5 L1448.7 88.0 L1478.8 95.0 L1499.6 102.0 L1513.5 85.8 L1520.0 81.1 L1554.7 71.9 L1589.4 60.3" fill="none" stroke="#f1d27c" stroke-width="3.4" stroke-linejoin="round" stroke-linecap="round" opacity="1"/>
<path d="M1235.7 60.3 L1240.4 78.8" fill="none" stroke="#f1d27c" stroke-width="3.4" stroke-linejoin="round" stroke-linecap="round" opacity="1"/>
<path d="M1242.7 88.0 L1245.0 104.3 L1240.4 134.4 L1217.2 155.2 L1208.0 173.7 L1177.9 187.6 L1154.7 208.5 L1145.5 224.7 L1143.1 254.8 L1124.6 278.0 L1120.0 289.5 L1116.0 306.0" fill="none" stroke="#f1d27c" stroke-width="3.4" stroke-linejoin="round" stroke-linecap="round" opacity="1"/>
<path d="M1242.7 88.0 L1263.5 111.2 L1270.5 150.6 L1286.7 178.4 L1296.0 196.9 L1305.2 210.8 L1328.3 238.6 L1351.5 252.4 L1374.6 275.6 L1397.8 291.8 L1421.0 306.0" fill="none" stroke="#f1d27c" stroke-width="3.4" stroke-linejoin="round" stroke-linecap="round" opacity="1"/>
<path d="M1832.5 122.8 L1844.0 146.0 L1862.6 178.4 L1881.0 215.4 L1890.4 234.0 L1913.5 257.0 L1920.0 278.0" fill="none" stroke="#f1d27c" stroke-width="3.4" stroke-linejoin="round" stroke-linecap="round" opacity="1"/>
<path d="M321.0 170.0 L365.0 174.0 L472.8 176.0 L526.0 177.2 L542.0 169.0 L563.0 155.0 L586.0 142.5 L618.6 127.4 L655.6 106.6 L695.0 88.0 L720.0 60.0" fill="none" stroke="#fcdf86" stroke-width="2.4" stroke-linejoin="round" stroke-linecap="round" opacity="1"/>
<path d="M321.0 75.0 L335.0 63.0 L338.0 60.0" fill="none" stroke="#fcdf86" stroke-width="2.4" stroke-linejoin="round" stroke-linecap="round" opacity="1"/>
<path d="M365.0 176.0 L375.5 183.0 L396.0 206.0 L419.5 220.0 L428.8 234.0 L456.6 254.8 L472.8 266.0 L486.7 289.5 L496.0 306.0" fill="none" stroke="#fcdf86" stroke-width="2.4" stroke-linejoin="round" stroke-linecap="round" opacity="1"/>
<path d="M754.7 60.3 L757.0 81.1 L750.0 104.3 L747.8 127.4 L752.4 150.6 L759.4 185.3 L765.0 196.9 L780.2 208.5 L789.4 224.7 L801.0 254.8 L821.9 306.0" fill="none" stroke="#fcdf86" stroke-width="2.4" stroke-linejoin="round" stroke-linecap="round" opacity="1"/>
<path d="M900.0 60.0 L951.5 62.6 L974.6 65.0 L1044.0 71.9 L1085.7 80.0 L1120.0 85.8 L1166.3 90.4 L1194.0 88.0 L1217.2 81.1 L1240.4 78.8" fill="none" stroke="#fcdf86" stroke-width="2.4" stroke-linejoin="round" stroke-linecap="round" opacity="1"/>
<path d="M1102.0 60.3 L1104.3 74.2 L1113.5 83.5 L1120.0 85.8" fill="none" stroke="#fcdf86" stroke-width="2.4" stroke-linejoin="round" stroke-linecap="round" opacity="1"/>
<path d="M1240.4 78.8 L1258.9 71.9 L1277.4 69.6 L1305.2 71.9 L1328.3 62.6 L1351.5 71.9 L1374.6 78.8 L1421.0 83.5 L1448.7 88.0 L1478.8 95.0 L1499.6 102.0 L1513.5 85.8 L1520.0 81.1 L1554.7 71.9 L1589.4 60.3" fill="none" stroke="#fcdf86" stroke-width="2.4" stroke-linejoin="round" stroke-linecap="round" opacity="1"/>
<path d="M1235.7 60.3 L1240.4 78.8" fill="none" stroke="#fcdf86" stroke-width="2.4" stroke-linejoin="round" stroke-linecap="round" opacity="1"/>
<path d="M1242.7 88.0 L1245.0 104.3 L1240.4 134.4 L1217.2 155.2 L1208.0 173.7 L1177.9 187.6 L1154.7 208.5 L1145.5 224.7 L1143.1 254.8 L1124.6 278.0 L1120.0 289.5 L1116.0 306.0" fill="none" stroke="#fcdf86" stroke-width="2.4" stroke-linejoin="round" stroke-linecap="round" opacity="1"/>
<path d="M1242.7 88.0 L1263.5 111.2 L1270.5 150.6 L1286.7 178.4 L1296.0 196.9 L1305.2 210.8 L1328.3 238.6 L1351.5 252.4 L1374.6 275.6 L1397.8 291.8 L1421.0 306.0" fill="none" stroke="#fcdf86" stroke-width="2.4" stroke-linejoin="round" stroke-linecap="round" opacity="1"/>
<path d="M1832.5 122.8 L1844.0 146.0 L1862.6 178.4 L1881.0 215.4 L1890.4 234.0 L1913.5 257.0 L1920.0 278.0" fill="none" stroke="#fcdf86" stroke-width="2.4" stroke-linejoin="round" stroke-linecap="round" opacity="1"/>
<rect x="516.8" y="172.6" width="18.5" height="10.400000000000006" rx="1.2" fill="#fcd23d" stroke="#e2b52a" stroke-width="0.8"/>
<text x="526.05" y="180.6" text-anchor="middle" font-family="Liberation Sans" font-size="8.5" fill="#3a3a3a">214</text>
<rect x="321" y="170" width="11" height="11" rx="1.2" fill="#fcd23d" stroke="#e2b52a" stroke-width="0.8"/>
<text x="326.5" y="178.6" text-anchor="middle" font-family="Liberation Sans" font-size="8.5" fill="#3a3a3a">14</text>
<rect x="449.6" y="251.3" width="18.399999999999977" height="10.399999999999977" rx="1.2" fill="#fcd23d" stroke="#e2b52a" stroke-width="0.8"/>
<text x="458.8" y="259.3" text-anchor="middle" font-family="Liberation Sans" font-size="8.5" fill="#3a3a3a">239</text>
<rect x="965.4" y="60.3" width="16.200000000000045" height="8.100000000000009" rx="1.2" fill="#fcd23d" stroke="#e2b52a" stroke-width="0.8"/>
<text x="973.5" y="66.0" text-anchor="middle" font-family="Liberation Sans" font-size="8.5" fill="#3a3a3a">214</text>
<rect x="1076.5" y="76.5" width="16.200000000000045" height="8.099999999999994" rx="1.2" fill="#fcd23d" stroke="#e2b52a" stroke-width="0.8"/>
<text x="1084.6" y="82.19999999999999" text-anchor="middle" font-family="Liberation Sans" font-size="8.5" fill="#3a3a3a">214</text>
<rect x="758.2" y="188.8" width="13.799999999999955" height="9.199999999999989" rx="1.2" fill="#fcd23d" stroke="#e2b52a" stroke-width="0.8"/>
<text x="765.1" y="195.6" text-anchor="middle" font-family="Liberation Sans" font-size="8.5" fill="#3a3a3a">61</text>
<rect x="782.5" y="222.4" width="13.899999999999977" height="9.199999999999989" rx="1.2" fill="#fcd23d" stroke="#e2b52a" stroke-width="0.8"/>
<text x="789.45" y="229.2" text-anchor="middle" font-family="Liberation Sans" font-size="8.5" fill="#3a3a3a">61</text>
<rect x="1125.8" y="83.5" width="10.400000000000091" height="8.099999999999994" rx="1.2" fill="#fcd23d" stroke="#e2b52a" stroke-width="0.8"/>
<text x="1131.0" y="89.19999999999999" text-anchor="middle" font-family="Liberation Sans" font-size="8.5" fill="#3a3a3a">6</text>
<rect x="1187" y="85.3" width="10.5" height="8.600000000000009" rx="1.2" fill="#fcd23d" stroke="#e2b52a" stroke-width="0.8"/>
<text x="1192.25" y="91.5" text-anchor="middle" font-family="Liberation Sans" font-size="8.5" fill="#3a3a3a">6</text>
<rect x="1278.6" y="68.4" width="17.40000000000009" height="9.299999999999997" rx="1.2" fill="#fcd23d" stroke="#e2b52a" stroke-width="0.8"/>
<text x="1287.3" y="75.3" text-anchor="middle" font-family="Liberation Sans" font-size="8.5" fill="#3a3a3a">214</text>
<rect x="1365.4" y="74.7" width="18.5" height="8.799999999999997" rx="1.2" fill="#fcd23d" stroke="#e2b52a" stroke-width="0.8"/>
<text x="1374.65" y="81.1" text-anchor="middle" font-family="Liberation Sans" font-size="8.5" fill="#3a3a3a">214</text>
<rect x="1490.4" y="98.5" width="17.299999999999955" height="9.299999999999997" rx="1.2" fill="#fcd23d" stroke="#e2b52a" stroke-width="0.8"/>
<text x="1499.0500000000002" y="105.39999999999999" text-anchor="middle" font-family="Liberation Sans" font-size="8.5" fill="#3a3a3a">214</text>
<rect x="1238" y="60.8" width="17.40000000000009" height="8.799999999999997" rx="1.2" fill="#fcd23d" stroke="#e2b52a" stroke-width="0.8"/>
<text x="1246.7" y="67.19999999999999" text-anchor="middle" font-family="Liberation Sans" font-size="8.5" fill="#3a3a3a">215</text>
<rect x="1197.5" y="168.6" width="17.5" height="9.300000000000011" rx="1.2" fill="#fcd23d" stroke="#e2b52a" stroke-width="0.8"/>
<text x="1206.25" y="175.5" text-anchor="middle" font-family="Liberation Sans" font-size="8.5" fill="#3a3a3a">215</text>
<rect x="1285.5" y="184.2" width="9.299999999999955" height="9.200000000000017" rx="1.2" fill="#fcd23d" stroke="#e2b52a" stroke-width="0.8"/>
<text x="1290.15" y="191.0" text-anchor="middle" font-family="Liberation Sans" font-size="8.5" fill="#3a3a3a">6</text>
<text x="345" y="113.5" font-family="Liberation Sans" font-size="10.6" fill="#5e5e5e" stroke="#f2f1ee" stroke-width="2" paint-order="stroke" letter-spacing="-0.3" stroke-linejoin="round" text-anchor="start">Dickel</text>
<text x="347.3" y="179.5" font-family="Liberation Sans" font-size="10.6" fill="#5e5e5e" stroke="#f2f1ee" stroke-width="2" paint-order="stroke" letter-spacing="-0.3" stroke-linejoin="round" text-anchor="start">Rehden</text>
<text x="353" y="194.6" font-family="Liberation Sans" font-size="10.6" fill="#5e5e5e" stroke="#f2f1ee" stroke-width="2" paint-order="stroke" letter-spacing="-0.3" stroke-linejoin="round" text-anchor="start">Samtgemeinde</text>
<text x="369.3" y="203.8" font-family="Liberation Sans" font-size="10.6" fill="#5e5e5e" stroke="#f2f1ee" stroke-width="2" paint-order="stroke" letter-spacing="-0.3" stroke-linejoin="round" text-anchor="start">Rehden</text>
<text x="475.5" y="177.9" font-family="Liberation Sans" font-size="10.6" fill="#5e5e5e" stroke="#f2f1ee" stroke-width="2" paint-order="stroke" letter-spacing="-0.3" stroke-linejoin="round" text-anchor="start">Barver</text>
<text x="548.7" y="154" font-family="Liberation Sans" font-size="10.6" fill="#5e5e5e" stroke="#f2f1ee" stroke-width="2" paint-order="stroke" letter-spacing="-0.3" stroke-linejoin="round" text-anchor="start">Freistatt</text>
<text x="590.4" y="137.2" font-family="Liberation Sans" font-size="10.6" fill="#5e5e5e" stroke="#f2f1ee" stroke-width="2" paint-order="stroke" letter-spacing="-0.3" stroke-linejoin="round" text-anchor="start">Wehrbleck</text>
<text x="647.5" y="157.5" font-family="Liberation Sans" font-size="10.6" fill="#5e5e5e" stroke="#f2f1ee" stroke-width="2" paint-order="stroke" letter-spacing="-0.3" stroke-linejoin="round" text-anchor="start">Varrel</text>
<text x="470.5" y="303.8" font-family="Liberation Sans" font-size="10.6" fill="#5e5e5e" stroke="#f2f1ee" stroke-width="2" paint-order="stroke" letter-spacing="-0.3" stroke-linejoin="round" text-anchor="start">Wagenfeld</text>
<text x="718.6" y="157.5" font-family="Liberation Sans" font-size="10.6" fill="#5e5e5e" stroke="#f2f1ee" stroke-width="2" paint-order="stroke" letter-spacing="-0.3" stroke-linejoin="round" text-anchor="start">Barenburg</text>
<text x="765.6" y="208.5" font-family="Liberation Sans" font-size="10.6" fill="#5e5e5e" stroke="#f2f1ee" stroke-width="2" paint-order="stroke" letter-spacing="-0.3" stroke-linejoin="round" text-anchor="start">Kirchdorf</text>
<text x="724.6" y="254.8" font-family="Liberation Sans" font-size="10.6" fill="#5e5e5e" stroke="#f2f1ee" stroke-width="2" paint-order="stroke" letter-spacing="-0.3" stroke-linejoin="round" text-anchor="start">Bahrenborstel</text>
<text x="989.2" y="115.9" font-family="Liberation Sans" font-size="10.6" fill="#5e5e5e" stroke="#f2f1ee" stroke-width="2" paint-order="stroke" letter-spacing="-0.3" stroke-linejoin="round" text-anchor="start">Pennigsehl</text>
<text x="1069.5" y="187.2" font-family="Liberation Sans" font-size="10.6" fill="#5e5e5e" stroke="#f2f1ee" stroke-width="2" paint-order="stroke" letter-spacing="-0.3" stroke-linejoin="round" text-anchor="start">Liebenau</text>
<text x="985.7" y="260.5" font-family="Liberation Sans" font-size="10.6" fill="#5e5e5e" stroke="#f2f1ee" stroke-width="2" paint-order="stroke" letter-spacing="-0.3" stroke-linejoin="round" text-anchor="start">Steyerberg</text>
<text x="1092.2" y="280.7" font-family="Liberation Sans" font-size="10.6" fill="#5e5e5e" stroke="#f2f1ee" stroke-width="2" paint-order="stroke" letter-spacing="-0.3" stroke-linejoin="round" text-anchor="start">Landesbergen</text>
<text x="1138.5" y="81.1" font-family="Liberation Sans" font-size="10.6" fill="#5e5e5e" stroke="#f2f1ee" stroke-width="2" paint-order="stroke" letter-spacing="-0.3" stroke-linejoin="round" text-anchor="start">Marklohe</text>
<text x="1205.2" y="119.3" font-family="Liberation Sans" font-size="10.6" fill="#5e5e5e" stroke="#f2f1ee" stroke-width="2" paint-order="stroke" letter-spacing="-0.3" stroke-linejoin="round" text-anchor="start">Nienburg/</text>
<text x="1214.4" y="129.8" font-family="Liberation Sans" font-size="10.6" fill="#5e5e5e" stroke="#f2f1ee" stroke-width="2" paint-order="stroke" letter-spacing="-0.3" stroke-linejoin="round" text-anchor="start">Weser</text>
<text x="1122.8" y="161" font-family="Liberation Sans" font-size="10.6" fill="#5e5e5e" stroke="#f2f1ee" stroke-width="2" paint-order="stroke" letter-spacing="-0.3" stroke-linejoin="round" text-anchor="start">Binnen</text>
<text x="1136.7" y="221.2" font-family="Liberation Sans" font-size="10.6" fill="#5e5e5e" stroke="#f2f1ee" stroke-width="2" paint-order="stroke" letter-spacing="-0.3" stroke-linejoin="round" text-anchor="start">Estorf</text>
<text x="1267" y="265.2" font-family="Liberation Sans" font-size="10.6" fill="#5e5e5e" stroke="#f2f1ee" stroke-width="2" paint-order="stroke" letter-spacing="-0.3" stroke-linejoin="round" text-anchor="start">Husum</text>
<text x="1323.2" y="211.9" font-family="Liberation Sans" font-size="10.6" fill="#5e5e5e" stroke="#f2f1ee" stroke-width="2" paint-order="stroke" letter-spacing="-0.3" stroke-linejoin="round" text-anchor="start">Linsburg</text>
<text x="1364.9" y="122.8" font-family="Liberation Sans" font-size="10.6" fill="#5e5e5e" stroke="#f2f1ee" stroke-width="2" paint-order="stroke" letter-spacing="-0.3" stroke-linejoin="round" text-anchor="start">Stöckse</text>
<text x="1422.5" y="89.25" font-family="Liberation Sans" font-size="10.6" fill="#5e5e5e" stroke="#f2f1ee" stroke-width="2" paint-order="stroke" letter-spacing="-0.3" stroke-linejoin="round" text-anchor="start">Steimbke</text>
<text x="1538.5" y="93.9" font-family="Liberation Sans" font-size="10.6" fill="#5e5e5e" stroke="#f2f1ee" stroke-width="2" paint-order="stroke" letter-spacing="-0.3" stroke-linejoin="round" text-anchor="start">Rodewald</text>
<text x="1778.1" y="172.6" font-family="Liberation Sans" font-size="10.6" fill="#5e5e5e" stroke="#f2f1ee" stroke-width="2" paint-order="stroke" letter-spacing="-0.3" stroke-linejoin="round" text-anchor="start">Lindwedel</text>
<text x="358.2" y="216.6" font-family="Liberation Sans" font-size="11.8" font-style="italic" fill="#2f7f4f" stroke="#f2f1ee" stroke-width="2" paint-order="stroke" letter-spacing="-0.3" stroke-linejoin="round" text-anchor="start">Rehdener</text>
<text x="354.7" y="228" font-family="Liberation Sans" font-size="11.8" font-style="italic" fill="#2f7f4f" stroke="#f2f1ee" stroke-width="2" paint-order="stroke" letter-spacing="-0.3" stroke-linejoin="round" text-anchor="start">Geestmoor</text>
<text x="524.9" y="89.25" font-family="Liberation Sans" font-size="11.8" font-style="italic" fill="#2f7f4f" stroke="#f2f1ee" stroke-width="2" paint-order="stroke" letter-spacing="-0.3" stroke-linejoin="round" text-anchor="start">Freistätter</text>
<text x="537.6" y="100.8" font-family="Liberation Sans" font-size="11.8" font-style="italic" fill="#2f7f4f" stroke="#f2f1ee" stroke-width="2" paint-order="stroke" letter-spacing="-0.3" stroke-linejoin="round" text-anchor="start">Moor</text>
<text x="834.6" y="139.5" font-family="Liberation Sans" font-size="11.8" font-style="italic" fill="#2f7f4f" stroke="#f2f1ee" stroke-width="2" paint-order="stroke" letter-spacing="-0.3" stroke-linejoin="round" text-anchor="start">Siedener Moor</text>
<text x="812" y="215.4" font-family="Liberation Sans" font-size="11.8" font-style="italic" fill="#2f7f4f" stroke="#f2f1ee" stroke-width="2" paint-order="stroke" letter-spacing="-0.3" stroke-linejoin="round" text-anchor="start">Hohes Moor</text>
<path d="M1238.5 104 C1236.5 94 1228.5 88 1228.5 81 A10 10 0 1 1 1248.5 81 C1248.5 88 1240.5 94 1238.5 104 Z" fill="#ea4335" stroke="#c5221f" stroke-width="0.8"/>
<circle cx="1238.5" cy="81" r="3.2" fill="#8f1a10"/>
<path d="M1232.3 114 C1230.3 104 1222.3 98 1222.3 91 A10 10 0 1 1 1242.3 91 C1242.3 98 1234.3 104 1232.3 114 Z" fill="#ea4335" stroke="#c5221f" stroke-width="0.8"/>
<circle cx="1232.3" cy="91" r="3.2" fill="#8f1a10"/>
<path d="M1092.7 177 C1090.7 167 1082.7 161 1082.7 154 A10 10 0 1 1 1102.7 154 C1102.7 161 1094.7 167 1092.7 177 Z" fill="#ea4335" stroke="#c5221f" stroke-width="0.8"/>
<circle cx="1092.7" cy="154" r="3.2" fill="#8f1a10"/>
<path d="M1008.2 215 C1006.2 205 998.2 199 998.2 192 A10 10 0 1 1 1018.2 192 C1018.2 199 1010.2 205 1008.2 215 Z" fill="#ea4335" stroke="#c5221f" stroke-width="0.8"/>
<circle cx="1008.2" cy="192" r="3.2" fill="#8f1a10"/>
<path d="M1007 224 C1005 214 997 208 997 201 A10 10 0 1 1 1017 201 C1017 208 1009 214 1007 224 Z" fill="#ea4335" stroke="#c5221f" stroke-width="0.8"/>
<circle cx="1007" cy="201" r="3.2" fill="#8f1a10"/>
<path d="M1006.3 257 C1004.3 247 996.3 241 996.3 234 A10 10 0 1 1 1016.3 234 C1016.3 241 1008.3 247 1006.3 257 Z" fill="#ea4335" stroke="#c5221f" stroke-width="0.8"/>
<circle cx="1006.3" cy="234" r="3.2" fill="#8f1a10"/>
<text x="327" y="298.5" font-family="Liberation Sans" font-size="17" font-weight="normal" letter-spacing="-0.2"><tspan fill="#4285f4">G</tspan><tspan fill="#ea4335">o</tspan><tspan fill="#fbbc05">o</tspan><tspan fill="#4285f4">g</tspan><tspan fill="#34a853">l</tspan><tspan fill="#ea4335">e</tspan></text>
<rect x="1448" y="292" width="472" height="14" fill="#f5f5f5" opacity="0.75"/>
<text x="1452.5" y="303" font-family="Liberation Sans" font-size="9.6" fill="#222">Kartendaten © 2021 GeoBasis-DE/BKG (©2009)</text>
<text x="1671.5" y="303" font-family="Liberation Sans" font-size="9.6" fill="#222">Nutzungsbedingungen</text>
<text x="1779.3" y="303" font-family="Liberation Sans" font-size="9.6" fill="#222">Fehler bei Google Maps melden</text>
<rect x="1880" y="220" width="32.4" height="64" rx="2" fill="#fff"/>
<path d="M1886 251.5 H1906" stroke="#e6e6e6" stroke-width="1"/>
<path d="M1896.2 228.5 V241.5 M1889.7 235 H1902.7" stroke="#666" stroke-width="2.6"/>
<path d="M1889.7 267.8 H1902.7" stroke="#666" stroke-width="2.6"/>
<rect x="1880" y="68.4" width="32.4" height="32.4" rx="2" fill="#fff"/>
<path d="M1901 77 H1905 V81 M1905 88 V92 H1901" fill="none" stroke="#666" stroke-width="2"/>
</svg>
</div>
<div class="card" style="left:321px;top:320px;width:517px;height:349px"></div>
<div class="card" style="left:863px;top:320px;width:517px;height:349px"></div>
<div class="card" style="left:1405px;top:320px;width:600px;height:349px"></div>
<div class="card" style="left:321px;top:683px;width:1700px;height:600px"></div>
<svg class="a" style="left:330px;top:332px" width="32" height="30" viewBox="0 0 32 30"><g fill="none" stroke="#333" stroke-width="1.35" stroke-linecap="round" stroke-linejoin="round"><path d="M8.4 12 L10.6 7.6 Q11.3 6.5 12.6 6.5 H19.4 Q20.7 6.5 21.4 7.6 L23.9 12"/><path d="M4.8 12.4 H27.4"/><path d="M5.9 12.6 V22 Q5.9 23 7 23 Q7.6 23 7.6 22 V20.4 H24.6 V22 Q24.6 23 25.6 23 Q26.4 23 26.4 22 V12.6"/><rect x="7" y="13.4" width="18.2" height="6.2" rx="2.6"/></g><ellipse cx="10.6" cy="16.4" rx="1.3" ry="0.8" fill="#333"/><ellipse cx="21.8" cy="16.4" rx="1.3" ry="0.8" fill="#333"/></svg>
<div class="ttl" style="left:365px;top:333px;letter-spacing:2.26px">Schnellbuchung</div>
<div class="th" style="left:339px;top:386px;letter-spacing:.75px">Fahrzeug</div>
<div class="a" style="left:334px;top:405px;width:490px;height:2px;background:#e3e3e3"></div>
<div class="vc" style="left:342px;top:411.75px;width:25.5px;height:25.5px;background:#000"><svg><use href="#bike"/></svg></div>
<div class="td" style="left:371px;top:415.70px;color:#c51a4d;font-size:14px;letter-spacing:.5px">Baker 6</div>
<div class="btn" style="left:778px;top:411.50px"><svg width="12" height="14"><use href="#calp"/></svg></div>
<div class="a" style="left:334px;top:445.00px;width:490px;height:1px;background:#e8e8e8"></div>
<div class="vc" style="left:342px;top:450.00px;width:25.5px;height:25.5px;background:#1538b9"><svg><use href="#star"/></svg></div>
<div class="td" style="left:371px;top:453.95px;color:#c51a4d;font-size:14px;letter-spacing:.5px">PKW Anhänger</div>
<div class="btn" style="left:778px;top:449.75px"><svg width="12" height="14"><use href="#calp"/></svg></div>
<div class="a" style="left:334px;top:483.25px;width:490px;height:1px;background:#e8e8e8"></div>
<div class="vc" style="left:342px;top:488.25px;width:25.5px;height:25.5px;background:#000"><svg><use href="#bike"/></svg></div>
<div class="td" style="left:371px;top:492.20px;color:#c51a4d;font-size:14px;letter-spacing:.5px">Cargo 8</div>
<div class="btn" style="left:778px;top:488.00px"><svg width="12" height="14"><use href="#calp"/></svg></div>
<div class="a" style="left:334px;top:521.50px;width:490px;height:1px;background:#e8e8e8"></div>
<div class="vc" style="left:342px;top:526.50px;width:25.5px;height:25.5px;background:#000"><svg><use href="#plug"/></svg></div>
<div class="td" style="left:371px;top:530.45px;color:#c51a4d;font-size:14px;letter-spacing:.5px">Schwarze ZOE</div>
<div class="btn" style="left:778px;top:526.25px"><svg width="12" height="14"><use href="#calp"/></svg></div>
<div class="a" style="left:334px;top:559.75px;width:490px;height:1px;background:#e8e8e8"></div>
<div class="vc" style="left:342px;top:564.75px;width:25.5px;height:25.5px;background:#ee1431"><svg><use href="#plug"/></svg></div>
<div class="td" style="left:371px;top:568.70px;color:#c51a4d;font-size:14px;letter-spacing:.5px">Rote ZOE mit AHK</div>
<div class="btn" style="left:778px;top:564.50px"><svg width="12" height="14"><use href="#calp"/></svg></div>
<div class="a" style="left:478.6px;top:611px;width:201.7px;height:31px;border:1px solid #e0e0e0;border-radius:3px"></div><div class="a" style="left:478.6px;top:611px;width:31.9px;height:31px;line-height:31px;text-align:center;font-size:14px;color:#444"><svg width="12" height="14" style="vertical-align:middle;margin-top:-3px" viewBox="0 0 12 14"><g fill="none" stroke="#444" stroke-width="1.25" stroke-linejoin="round"><path d="M2.5 2 V12 M10 2 L4 7 L10 12 Z"/></g></svg></div><div class="a" style="left:510.0px;top:611px;width:1px;height:31px;background:#e0e0e0"></div><div class="a" style="left:510.5px;top:611px;width:28.0px;height:31px;line-height:31px;text-align:center;font-size:14px;color:#444"><svg width="10" height="14" style="vertical-align:middle;margin-top:-3px" viewBox="0 0 10 14"><path d="M7 1.5 L2.5 7 L7 12.5" fill="none" stroke="#444" stroke-width="1.25" stroke-linecap="round"/></svg></div><div class="a" style="left:538.0px;top:611px;width:1px;height:31px;background:#e0e0e0"></div><div class="a" style="left:538.5px;top:611px;width:24.9px;height:31px;line-height:31px;text-align:center;font-size:14px;color:#444">1</div><div class="a" style="left:562.9px;top:611px;width:1px;height:31px;background:#e0e0e0"></div><div class="a" style="left:563.4px;top:611px;width:28.6px;height:31px;background:#c8033c"></div><div class="a" style="left:563.4px;top:611px;width:28.6px;height:31px;line-height:31px;text-align:center;font-size:14px;color:#fff"><b>2</b></div><div class="a" style="left:591.5px;top:611px;width:1px;height:31px;background:#e0e0e0"></div><div class="a" style="left:592.0px;top:611px;width:28.0px;height:31px;line-height:31px;text-align:center;font-size:14px;color:#444">3</div><div class="a" style="left:619.5px;top:611px;width:1px;height:31px;background:#e0e0e0"></div><div class="a" style="left:620.0px;top:611px;width:28.5px;height:31px;line-height:31px;text-align:center;font-size:14px;color:#444"><svg width="10" height="14" style="vertical-align:middle;margin-top:-3px" viewBox="0 0 10 14"><path d="M3 1.5 L7.5 7 L3 12.5" fill="none" stroke="#444" stroke-width="1.25" stroke-linecap="round"/></svg></div><div class="a" style="left:648.0px;top:611px;width:1px;height:31px;background:#e0e0e0"></div><div class="a" style="left:648.5px;top:611px;width:31.8px;height:31px;line-height:31px;text-align:center;font-size:14px;color:#444"><svg width="12" height="14" style="vertical-align:middle;margin-top:-3px" viewBox="0 0 12 14"><g fill="none" stroke="#444" stroke-width="1.25" stroke-linejoin="round"><path d="M9.5 2 V12 M2 2 L8 7 L2 12 Z"/></g></svg></div>
<svg class="a" style="left:874px;top:332px" width="36" height="28" viewBox="0 0 36 28"><g fill="none" stroke="#333" stroke-width="1.9" stroke-linecap="round" stroke-linejoin="round"><circle cx="17.7" cy="8.8" r="4.3"/><circle cx="7.2" cy="9" r="2.9"/><circle cx="28.2" cy="9" r="2.9"/><path d="M10.2 22.6 Q10.2 24.4 12 24.4 H23.4 Q25.4 24.4 25.4 22.6 V21.2 Q25.4 16.4 21.6 16.2 Q17.7 17.8 13.8 16.2 Q10.2 16.4 10.2 21.2 Z"/><path d="M3.4 18.4 Q4.6 15.4 8.6 15.4 M32 18.4 Q30.8 15.4 26.8 15.4"/></g></svg>
<div class="ttl" style="left:914px;top:333px">Mitfahrzentrale</div>
<div class="th" style="left:881px;top:386px">Zielort</div>
<div class="th" style="left:1012px;top:386px;letter-spacing:1.6px">Wann</div>
<div class="a" style="left:877px;top:405.5px;width:489px;height:2px;background:#e3e3e3"></div>
<div class="td" style="left:881px;top:413.00px;letter-spacing:.95px">Nienburg Bhf</div>
<div class="td" style="left:1012px;top:413.00px;letter-spacing:.12px">25. May. 22:00 Uhr</div>
<div class="btn" style="left:1320px;top:411.50px"><svg width="11.6" height="10" style="left:15.2px;top:9.5px" viewBox="0 0 14 12"><use href="#env"/></svg></div>
<div class="a" style="left:877px;top:445.00px;width:489px;height:1px;background:#e8e8e8"></div>
<div class="td" style="left:881px;top:451.25px;letter-spacing:.95px">Steyerberg</div>
<div class="td" style="left:1012px;top:451.25px;letter-spacing:.12px">31. May. 07:30 Uhr</div>
<div class="btn" style="left:1320px;top:449.75px"><svg width="11.6" height="10" style="left:15.2px;top:9.5px" viewBox="0 0 14 12"><use href="#env"/></svg></div>
<div class="a" style="left:877px;top:483.25px;width:489px;height:1px;background:#e8e8e8"></div>
<div class="td" style="left:881px;top:489.50px;letter-spacing:.95px">Steyerberg</div>
<div class="td" style="left:1012px;top:489.50px;letter-spacing:.12px">31. May. 12:30 Uhr</div>
<div class="btn" style="left:1320px;top:488.00px"><svg width="11.6" height="10" style="left:15.2px;top:9.5px" viewBox="0 0 14 12"><use href="#env"/></svg></div>
<div class="a" style="left:877px;top:521.50px;width:489px;height:1px;background:#e8e8e8"></div>
<div class="td" style="left:881px;top:527.75px;letter-spacing:.95px">Steyerberg</div>
<div class="td" style="left:1012px;top:527.75px;letter-spacing:.12px">01. Jun. 07:30 Uhr</div>
<div class="btn" style="left:1320px;top:526.25px"><svg width="11.6" height="10" style="left:15.2px;top:9.5px" viewBox="0 0 14 12"><use href="#env"/></svg></div>
<div class="a" style="left:877px;top:559.75px;width:489px;height:1px;background:#e8e8e8"></div>
<div class="td" style="left:881px;top:566.00px;letter-spacing:.95px">Steyerberg</div>
<div class="td" style="left:1012px;top:566.00px;letter-spacing:.12px">01. Jun. 12:30 Uhr</div>
<div class="btn" style="left:1320px;top:564.50px"><svg width="11.6" height="10" style="left:15.2px;top:9.5px" viewBox="0 0 14 12"><use href="#env"/></svg></div>
<div class="a" style="left:1005px;top:611px;width:232.0px;height:31px;border:1px solid #e0e0e0;border-radius:3px"></div><div class="a" style="left:1005.0px;top:611px;width:32.7px;height:31px;line-height:31px;text-align:center;font-size:14px;color:#444"><svg width="12" height="14" style="vertical-align:middle;margin-top:-3px" viewBox="0 0 12 14"><g fill="none" stroke="#444" stroke-width="1.25" stroke-linejoin="round"><path d="M2.5 2 V12 M10 2 L4 7 L10 12 Z"/></g></svg></div><div class="a" style="left:1037.2px;top:611px;width:1px;height:31px;background:#e0e0e0"></div><div class="a" style="left:1037.7px;top:611px;width:27.3px;height:31px;line-height:31px;text-align:center;font-size:14px;color:#444"><svg width="10" height="14" style="vertical-align:middle;margin-top:-3px" viewBox="0 0 10 14"><path d="M7 1.5 L2.5 7 L7 12.5" fill="none" stroke="#444" stroke-width="1.25" stroke-linecap="round"/></svg></div><div class="a" style="left:1064.5px;top:611px;width:1px;height:31px;background:#e0e0e0"></div><div class="a" style="left:1065.0px;top:611px;width:26.8px;height:31px;background:#c8033c"></div><div class="a" style="left:1065.0px;top:611px;width:26.8px;height:31px;line-height:31px;text-align:center;font-size:14px;color:#fff">1</div><div class="a" style="left:1091.3px;top:611px;width:1px;height:31px;background:#e0e0e0"></div><div class="a" style="left:1091.8px;top:611px;width:27.7px;height:31px;line-height:31px;text-align:center;font-size:14px;color:#444">2</div><div class="a" style="left:1119.0px;top:611px;width:1px;height:31px;background:#e0e0e0"></div><div class="a" style="left:1119.5px;top:611px;width:28.5px;height:31px;line-height:31px;text-align:center;font-size:14px;color:#444">3</div><div class="a" style="left:1147.5px;top:611px;width:1px;height:31px;background:#e0e0e0"></div><div class="a" style="left:1148.0px;top:611px;width:29.7px;height:31px;line-height:31px;text-align:center;font-size:14px;color:#444">4</div><div class="a" style="left:1177.2px;top:611px;width:1px;height:31px;background:#e0e0e0"></div><div class="a" style="left:1177.7px;top:611px;width:27.3px;height:31px;line-height:31px;text-align:center;font-size:14px;color:#444"><svg width="10" height="14" style="vertical-align:middle;margin-top:-3px" viewBox="0 0 10 14"><path d="M3 1.5 L7.5 7 L3 12.5" fill="none" stroke="#444" stroke-width="1.25" stroke-linecap="round"/></svg></div><div class="a" style="left:1204.5px;top:611px;width:1px;height:31px;background:#e0e0e0"></div><div class="a" style="left:1205.0px;top:611px;width:32.0px;height:31px;line-height:31px;text-align:center;font-size:14px;color:#444"><svg width="12" height="14" style="vertical-align:middle;margin-top:-3px" viewBox="0 0 12 14"><g fill="none" stroke="#444" stroke-width="1.25" stroke-linejoin="round"><path d="M9.5 2 V12 M2 2 L8 7 L2 12 Z"/></g></svg></div>
<svg class="a" style="left:1414px;top:332px" width="32" height="30" viewBox="0 0 32 30"><g fill="none" stroke="#333" stroke-width="2.1" stroke-linecap="round"><circle cx="14.6" cy="12.6" r="8.6"/><path d="M20.8 18.8 L26.6 24.6"/></g></svg>
<div class="ttl" style="left:1449px;top:333px;letter-spacing:1.77px">Fahrersuche</div>
<div class="td" style="left:1419px;top:380px;color:#9a9a9a;letter-spacing:.52px">Derzeit fahren alle selbst.</div>
<svg class="a" style="left:332px;top:695px" width="26" height="28" viewBox="0 0 26 28"><g fill="none" stroke="#333" stroke-width="1.9" stroke-linejoin="round"><rect x="3.45" y="6.65" width="18.4" height="18.6" rx="1.6"/></g><path d="M3.2 8.2 H22.1" stroke="#333" stroke-width="3"/><path d="M8.2 3.4 V6.4 M17.2 3.4 V6.4" stroke="#333" stroke-width="2" stroke-linecap="round"/></svg>
<div class="ttl" style="left:363px;top:696px;letter-spacing:1.62px">Kalender</div>
<div class="td" style="left:335px;top:743px;color:#444;font-size:14px;letter-spacing:1.0px">Datum</div>
<div class="a" style="left:335px;top:768px;width:508px;height:31px;border:1px solid #dcdcdc;border-radius:3px"></div>
<div class="td" style="left:345px;top:775px;color:#444;letter-spacing:-.4px">So., 23.05.2021</div>
<div class="td" style="left:868px;top:743px;color:#444;letter-spacing:.6px">Fahrzeuge</div>
<div class="a" style="left:868px;top:767px;width:508px;height:33px;border-radius:17px;background:#f4f5f7"></div>
<div class="vc" style="left:884.90px;top:777.8px;width:19px;height:19px;background:#8e8e8e"><svg><use href="#bike"/></svg></div>
<div class="vc" style="left:913.30px;top:777.8px;width:19px;height:19px;background:#8e8e8e"><svg><use href="#bike"/></svg></div>
<div class="vc" style="left:941.70px;top:777.8px;width:19px;height:19px;background:#000"><svg><use href="#bike"/></svg></div>
<div class="vc" style="left:970.10px;top:777.8px;width:19px;height:19px;background:#000"><svg><use href="#bike"/></svg></div>
<div class="vc" style="left:998.50px;top:777.8px;width:19px;height:19px;background:#1538b9"><svg><use href="#star"/></svg></div>
<div class="vc" style="left:1026.90px;top:777.8px;width:19px;height:19px;background:#000"><svg><use href="#bike"/></svg></div>
<div class="vc" style="left:1055.30px;top:777.8px;width:19px;height:19px;background:#000"><svg><use href="#plug"/></svg></div>
<div class="vc" style="left:1083.70px;top:777.8px;width:19px;height:19px;background:#ee1431"><svg><use href="#plug"/></svg></div>
<div class="vc" style="left:1112.10px;top:777.8px;width:19px;height:19px;background:#6b6b6b"><svg><use href="#plug"/></svg></div>
<div class="vc" style="left:1140.50px;top:777.8px;width:19px;height:19px;background:#9c16d2"><svg><use href="#plug"/></svg></div>
<div class="vc" style="left:1168.90px;top:777.8px;width:19px;height:19px;background:#999"><svg><use href="#bike"/></svg></div>
<div class="vc" style="left:1197.30px;top:777.8px;width:19px;height:19px;background:#000"><svg><use href="#bike"/></svg></div>
<div class="vc" style="left:1225.70px;top:777.8px;width:19px;height:19px;background:#79b929"><svg><use href="#plug"/></svg></div>
<div class="vc" style="left:1254.10px;top:777.8px;width:19px;height:19px;background:#c9c9c9"><svg><use href="#plug"/></svg></div>
<div class="vc" style="left:1282.50px;top:777.8px;width:19px;height:19px;background:#79b929"><svg><use href="#plug"/></svg></div>
<svg class="a" style="left:1353px;top:780px" width="8" height="6"><path d="M0.5 5 H7.5 L4 1 Z" fill="#333"/></svg>
<div class="a" style="left:334px;top:812.5px;width:199px;height:27px;border-radius:14px;background:#f3f5f8"></div>
<div class="a" style="left:334px;top:812.5px;width:48px;height:27px;border-radius:14px 0 0 14px;background:#c8033c"></div>
<div class="a" style="left:343px;top:818px;font-size:14px;letter-spacing:1.5px;color:#fff;line-height:16px">TAG</div>
<div class="a" style="left:390.5px;top:818px;font-size:14px;letter-spacing:1.5px;color:#222;line-height:16px">WOCHE</div>
<div class="a" style="left:468px;top:818px;font-size:14px;letter-spacing:1.5px;color:#222;line-height:16px">MONAT</div>
<div class="a" style="left:1107px;top:818px;font-size:16.5px;letter-spacing:-.1px;color:#333;line-height:20px">23. Mai 2021</div>
<div class="a" style="left:1785px;top:812.2px;width:123px;height:26.8px;border-radius:14px;background:#c8033c;overflow:hidden"><div class="a" style="left:0;top:0;width:70px;height:27px;background:#e0678a"></div></div>
<div class="a" style="left:1793px;top:818px;font-size:14px;letter-spacing:1.4px;color:#fff;line-height:16px">HEUTE</div>
<svg class="a" style="left:1860px;top:818px" width="40" height="16" viewBox="0 0 40 16"><g fill="none" stroke="#fff" stroke-width="2" stroke-linecap="round" stroke-linejoin="round"><path d="M9.6 3.6 L5.8 8 L9.6 12.4 M30.4 3.6 L34.2 8 L30.4 12.4"/></g></svg>
<div class="a" style="left:335px;top:855.5px;width:1573px;height:1px;background:#e4e4e4"></div>
<div class="a" style="left:335px;top:855.5px;width:1px;height:300px;background:#e4e4e4"></div>
<div class="a" style="left:570.5px;top:855.5px;width:1px;height:300px;background:#e4e4e4"></div>
<div class="a" style="left:574px;top:855.5px;width:1px;height:300px;background:#e4e4e4"></div>
<div class="a" style="left:1907px;top:855.5px;width:1px;height:300px;background:#e4e4e4"></div>
<div class="a" style="left:592.8px;top:882px;width:1px;height:200px;background:#ececec"></div>
<div class="a" style="left:621.4px;top:882px;width:1px;height:200px;background:#ececec"></div>
<div class="a" style="left:650.0px;top:882px;width:1px;height:200px;background:#ececec"></div>
<div class="a" style="left:678.6px;top:882px;width:1px;height:200px;background:#ececec"></div>
<div class="a" style="left:707.2px;top:882px;width:1px;height:200px;background:#ececec"></div>
<div class="a" style="left:735.8px;top:882px;width:1px;height:200px;background:#ececec"></div>
<div class="a" style="left:764.4px;top:882px;width:1px;height:200px;background:#ececec"></div>
<div class="a" style="left:793.0px;top:882px;width:1px;height:200px;background:#ececec"></div>
<div class="a" style="left:821.6px;top:882px;width:1px;height:200px;background:#ececec"></div>
<div class="a" style="left:850.2px;top:882px;width:1px;height:200px;background:#ececec"></div>
<div class="a" style="left:878.8px;top:882px;width:1px;height:200px;background:#ececec"></div>
<div class="a" style="left:907.3px;top:882px;width:1px;height:200px;background:#ececec"></div>
<div class="a" style="left:935.9px;top:882px;width:1px;height:200px;background:#ececec"></div>
<div class="a" style="left:964.5px;top:882px;width:1px;height:200px;background:#ececec"></div>
<div class="a" style="left:993.1px;top:882px;width:1px;height:200px;background:#ececec"></div>
<div class="a" style="left:1021.7px;top:882px;width:1px;height:200px;background:#ececec"></div>
<div class="a" style="left:1050.3px;top:882px;width:1px;height:200px;background:#ececec"></div>
<div class="a" style="left:1078.9px;top:882px;width:1px;height:200px;background:#ececec"></div>
<div class="a" style="left:1107.5px;top:882px;width:1px;height:200px;background:#ececec"></div>
<div class="a" style="left:1136.1px;top:882px;width:1px;height:200px;background:#ececec"></div>
<div class="a" style="left:1164.7px;top:882px;width:1px;height:200px;background:#ececec"></div>
<div class="a" style="left:1193.3px;top:882px;width:1px;height:200px;background:#ececec"></div>
<div class="a" style="left:1221.9px;top:882px;width:1px;height:200px;background:#ececec"></div>
<div class="a" style="left:1250.5px;top:882px;width:1px;height:200px;background:#ececec"></div>
<div class="a" style="left:1279.1px;top:882px;width:1px;height:200px;background:#ececec"></div>
<div class="a" style="left:1307.7px;top:882px;width:1px;height:200px;background:#ececec"></div>
<div class="a" style="left:1336.3px;top:882px;width:1px;height:200px;background:#ececec"></div>
<div class="a" style="left:1364.9px;top:882px;width:1px;height:200px;background:#ececec"></div>
<div class="a" style="left:1393.5px;top:882px;width:1px;height:200px;background:#ececec"></div>
<div class="a" style="left:1422.1px;top:882px;width:1px;height:200px;background:#ececec"></div>
<div class="a" style="left:1450.7px;top:882px;width:1px;height:200px;background:#ececec"></div>
<div class="a" style="left:1479.2px;top:882px;width:1px;height:200px;background:#ececec"></div>
<div class="a" style="left:1507.8px;top:882px;width:1px;height:200px;background:#ececec"></div>
<div class="a" style="left:1536.4px;top:882px;width:1px;height:200px;background:#ececec"></div>
<div class="a" style="left:1565.0px;top:882px;width:1px;height:200px;background:#ececec"></div>
<div class="a" style="left:1593.6px;top:882px;width:1px;height:200px;background:#ececec"></div>
<div class="a" style="left:1622.2px;top:882px;width:1px;height:200px;background:#ececec"></div>
<div class="a" style="left:1650.8px;top:882px;width:1px;height:200px;background:#ececec"></div>
<div class="a" style="left:1679.4px;top:882px;width:1px;height:200px;background:#ececec"></div>
<div class="a" style="left:1708.0px;top:882px;width:1px;height:200px;background:#ececec"></div>
<div class="a" style="left:1736.6px;top:882px;width:1px;height:200px;background:#ececec"></div>
<div class="a" style="left:1765.2px;top:882px;width:1px;height:200px;background:#ececec"></div>
<div class="a" style="left:1793.8px;top:882px;width:1px;height:200px;background:#ececec"></div>
<div class="a" style="left:1822.4px;top:882px;width:1px;height:200px;background:#ececec"></div>
<div class="a" style="left:1851.0px;top:882px;width:1px;height:200px;background:#ececec"></div>
<div class="a" style="left:1879.6px;top:882px;width:1px;height:200px;background:#ececec"></div>
<div class="a" style="left:650.0px;top:855.5px;width:1px;height:230px;background:#e0e0e0"></div>
<div class="a" style="left:677.2px;top:861px;width:60px;text-align:center;font-weight:bold;font-size:14px;letter-spacing:.2px;color:#333;line-height:16px">13:00</div>
<div class="a" style="left:764.4px;top:855.5px;width:1px;height:230px;background:#e0e0e0"></div>
<div class="a" style="left:791.6px;top:861px;width:60px;text-align:center;font-weight:bold;font-size:14px;letter-spacing:.2px;color:#333;line-height:16px">14:00</div>
<div class="a" style="left:878.8px;top:855.5px;width:1px;height:230px;background:#e0e0e0"></div>
<div class="a" style="left:906.0px;top:861px;width:60px;text-align:center;font-weight:bold;font-size:14px;letter-spacing:.2px;color:#333;line-height:16px">15:00</div>
<div class="a" style="left:993.1px;top:855.5px;width:1px;height:230px;background:#e0e0e0"></div>
<div class="a" style="left:1020.3px;top:861px;width:60px;text-align:center;font-weight:bold;font-size:14px;letter-spacing:.2px;color:#333;line-height:16px">16:00</div>
<div class="a" style="left:1107.5px;top:855.5px;width:1px;height:230px;background:#e0e0e0"></div>
<div class="a" style="left:1134.7px;top:861px;width:60px;text-align:center;font-weight:bold;font-size:14px;letter-spacing:.2px;color:#333;line-height:16px">17:00</div>
<div class="a" style="left:1221.9px;top:855.5px;width:1px;height:230px;background:#e0e0e0"></div>
<div class="a" style="left:1249.1px;top:861px;width:60px;text-align:center;font-weight:bold;font-size:14px;letter-spacing:.2px;color:#333;line-height:16px">18:00</div>
<div class="a" style="left:1336.3px;top:855.5px;width:1px;height:230px;background:#e0e0e0"></div>
<div class="a" style="left:1363.5px;top:861px;width:60px;text-align:center;font-weight:bold;font-size:14px;letter-spacing:.2px;color:#333;line-height:16px">19:00</div>
<div class="a" style="left:1450.7px;top:855.5px;width:1px;height:230px;background:#e0e0e0"></div>
<div class="a" style="left:1477.8px;top:861px;width:60px;text-align:center;font-weight:bold;font-size:14px;letter-spacing:.2px;color:#333;line-height:16px">20:00</div>
<div class="a" style="left:1565.0px;top:855.5px;width:1px;height:230px;background:#e0e0e0"></div>
<div class="a" style="left:1592.2px;top:861px;width:60px;text-align:center;font-weight:bold;font-size:14px;letter-spacing:.2px;color:#333;line-height:16px">21:00</div>
<div class="a" style="left:1679.4px;top:855.5px;width:1px;height:230px;background:#e0e0e0"></div>
<div class="a" style="left:1706.6px;top:861px;width:60px;text-align:center;font-weight:bold;font-size:14px;letter-spacing:.2px;color:#333;line-height:16px">22:00</div>
<div class="a" style="left:1793.8px;top:855.5px;width:1px;height:230px;background:#e0e0e0"></div>
<div class="a" style="left:1821.0px;top:861px;width:60px;text-align:center;font-weight:bold;font-size:14px;letter-spacing:.2px;color:#333;line-height:16px">23:00</div>
<div class="a" style="left:576px;top:861px;font-weight:bold;font-size:14px;letter-spacing:.2px;color:#333;line-height:16px">12:00</div>
<div class="a" style="left:336px;top:861px;width:235px;text-align:center;font-weight:bold;font-size:14px;letter-spacing:.4px;color:#333;line-height:16px">Fahrzeug</div>
<div class="a" style="left:335px;top:881.5px;width:1573px;height:1px;background:#e4e4e4"></div>
<div class="a" style="left:335px;top:936.5px;width:1573px;height:1px;background:#e4e4e4"></div>
<div class="a" style="left:335px;top:989.5px;width:1573px;height:1px;background:#e4e4e4"></div>
<div class="a" style="left:335px;top:1043px;width:1573px;height:1px;background:#e4e4e4"></div>
<div class="a" style="left:335px;top:881px;width:1573px;height:2px;background:#e4e4e4"></div>
<div class="a" style="left:575px;top:884px;width:1332px;height:50px;background:#a6a6a6"></div>
<div class="a" style="left:575px;top:938.5px;width:1332px;height:49.5px;background:#a6a6a6"></div>
<div class="vc" style="left:348.5px;top:899.1px;width:25.6px;height:25.6px;background:#8e8e8e"><svg><use href="#bike"/></svg></div>
<div class="td" style="left:378px;top:904.4px;color:#444;font-size:13.6px;letter-spacing:-0.3px">i:SY 2</div>
<div class="vc" style="left:348.5px;top:953.5px;width:25.6px;height:25.6px;background:#8e8e8e"><svg><use href="#bike"/></svg></div>
<div class="td" style="left:378px;top:958.8px;color:#444;font-size:13.6px;letter-spacing:-0.3px">i:SY 3</div>
<div class="vc" style="left:348.5px;top:1007.0px;width:25.6px;height:25.6px;background:#000"><svg><use href="#bike"/></svg></div>
<div class="td" style="left:378px;top:1012.3px;color:#444;font-size:13.6px;letter-spacing:0.7px">Baker 4</div>
<div class="vc" style="left:348.5px;top:1059.8px;width:25.6px;height:25.6px;background:#000"><svg><use href="#bike"/></svg></div>
<div class="td" style="left:378px;top:1065.1px;color:#444;font-size:13.6px;letter-spacing:0.7px">Baker 6</div>
<div class="a" style="left:1327.5px;top:881px;width:1px;height:200px;background:#e8161c"></div>
<svg class="a" style="left:1323px;top:855px" width="10" height="8"><path d="M1 1 H9 L5 6.5 Z" fill="#e8161c"/></svg>
<div class="a" style="left:1664px;top:0;width:232px;height:123px;background:#000"></div>
<div class="a" style="left:1668px;top:6.6px;font-size:102px;line-height:115px;color:#fff;letter-spacing:-1.8px;-webkit-text-stroke:0.9px #fff">202</div>
<svg class="a" style="left:1840px;top:24px" width="36" height="80" viewBox="1840 24 36 80"><path d="M1865.6 26.9 H1872.5 V99.4 H1861.25 V48.1 H1843.75 V40.2 Q1853.5 40.2 1858.5 36.2 Q1862.8 32.6 1865.6 26.9 Z" fill="#fff"/></svg>
<svg class="a" style="left:1540px;top:960px" width="370" height="95" viewBox="1540 960 370 95"><g fill="#fb0000" fill-rule="evenodd">
<path d="M1561.8 975.2 H1575.5 V1040.6 H1562.2 Z"/>
<path d="M1583.3 1040.3 V990 Q1583.3 975.1 1598 975.1 H1651.6 L1650.9 987.4 H1600.2 Q1595.6 987.4 1595.6 992 V1003.3 H1650.7 V1013.9 H1595.6 V1040 Z"/>
<path d="M1657.1 975.5 H1707.8 Q1720 975.5 1720 987.7 V1039.8 H1663.5 Q1655.7 1039.8 1655.7 1032 V1012 Q1655.7 1004.2 1663.5 1004.2 H1709 V992.6 Q1709 987.8 1704.2 987.8 H1657.1 Z M1672.2 1013.3 H1709 V1031.1 H1672.2 Q1665.7 1031.1 1665.7 1024.6 V1019.8 Q1665.7 1013.3 1672.2 1013.3 Z"/>
<path d="M1733.5 975.1 H1783 Q1790.3 975.1 1790.3 982.4 V1013.3 H1738.8 V1030.5 H1789.9 V1040.2 H1733.5 Q1726.3 1040.2 1726.3 1033 V982.4 Q1726.3 975.1 1733.5 975.1 Z M1741 985.7 H1776.2 Q1780.7 985.7 1780.7 990.2 V1000.5 Q1780.7 1005 1776.2 1005 H1741 Q1736.5 1005 1736.5 1000.5 V990.2 Q1736.5 985.7 1741 985.7 Z"/>
<path d="M1797.1 1040.2 V978.6 Q1797.1 975.1 1800.6 975.1 H1814 Q1817 975.1 1818.6 978 L1846.2 1028.6 L1876.8 978 Q1878.4 975.1 1881.4 975.1 H1892 Q1895.4 975.1 1895.4 978.6 V1040.2 H1882.8 V988.1 L1851 1036.6 Q1849 1039.8 1846.2 1039.8 Q1843.4 1039.8 1841.4 1036.6 L1809.1 988.1 V1040.2 Z"/>
</g></svg>

</body></html>
